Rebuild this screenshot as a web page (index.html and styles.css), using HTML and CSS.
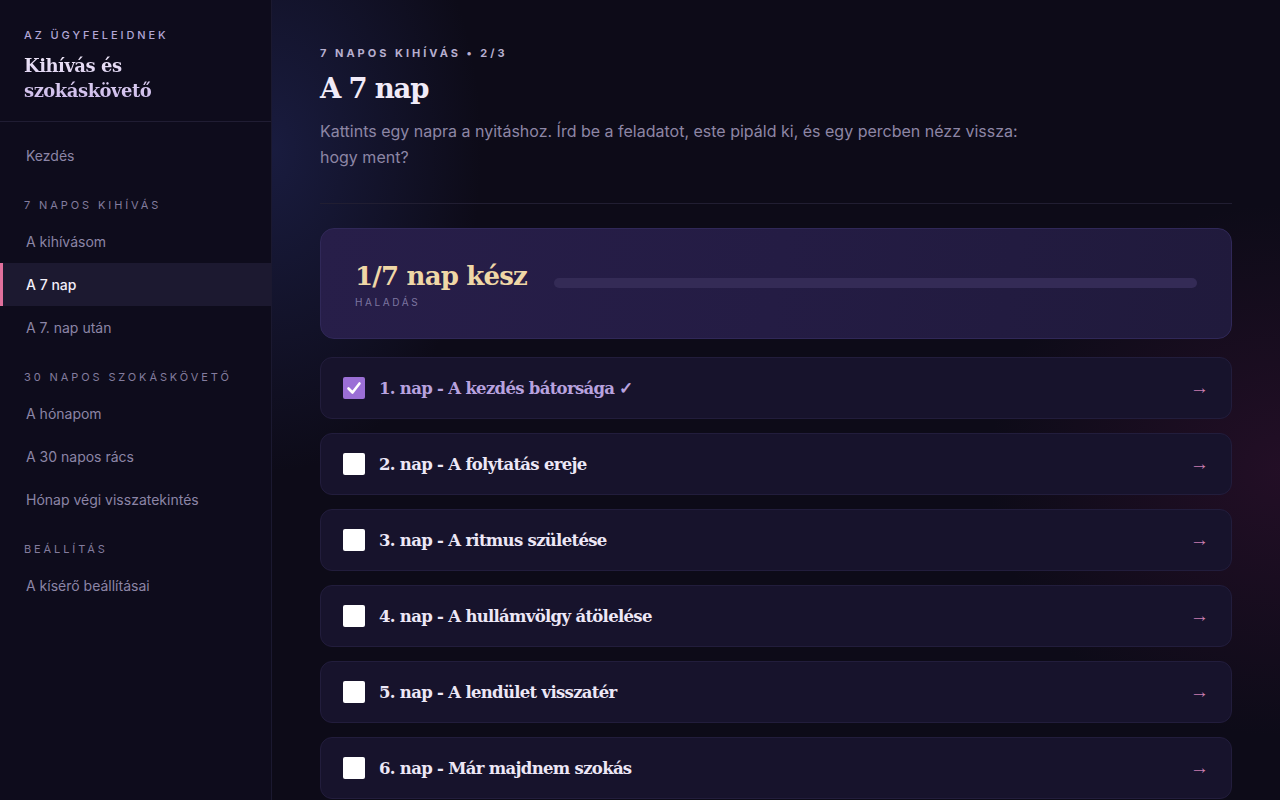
FILE: index.html
```html
<!DOCTYPE html>
<html lang="hu">
<head>
<meta charset="utf-8">
<title>A 7 nap</title>
<link rel="stylesheet" href="styles.css">
</head>
<body>
<div class="app">
  <aside class="sidebar">
    <div class="brand">
      <div class="brand-eyebrow">AZ ÜGYFELEIDNEK</div>
      <div class="brand-title">Kihívás és<br>szokáskövető</div>
    </div>
    <nav class="nav">
      <a class="nav-item first">Kezdés</a>
      <div class="nav-label">7 NAPOS KIHÍVÁS</div>
      <a class="nav-item">A kihívásom</a>
      <a class="nav-item active">A 7 nap</a>
      <a class="nav-item">A 7. nap után</a>
      <div class="nav-label">30 NAPOS SZOKÁSKÖVETŐ</div>
      <a class="nav-item">A hónapom</a>
      <a class="nav-item">A 30 napos rács</a>
      <a class="nav-item">Hónap végi visszatekintés</a>
      <div class="nav-label">BEÁLLÍTÁS</div>
      <a class="nav-item">A kísérő beállításai</a>
    </nav>
  </aside>
  <main class="main">
    <header class="page-head">
      <div class="eyebrow">7 NAPOS KIHÍVÁS • 2/3</div>
      <h1 class="title">A 7 nap</h1>
      <p class="lead">Kattints egy napra a nyitáshoz. Írd be a feladatot, este pipáld ki, és egy percben nézz vissza: hogy ment?</p>
    </header>
    <section class="progress-card">
      <div class="progress-text">
        <div class="progress-value">1/7 nap kész</div>
        <div class="progress-label">HALADÁS</div>
      </div>
      <div class="progress-bar"><div class="progress-fill" style="width:0%"></div></div>
    </section>
    <ul class="days">
      <li class="day done"><span class="check checked"><svg viewBox="0 0 22 22" width="22" height="22"><path d="M5.5 11.5 L9.5 15.5 L16.5 6.5" fill="none" stroke="#fff" stroke-width="2.6" stroke-linecap="round" stroke-linejoin="round"/></svg></span><span class="day-title">1. nap - A kezdés bátorsága ✓</span><span class="arrow">→</span></li>
      <li class="day"><span class="check"></span><span class="day-title">2. nap - A folytatás ereje</span><span class="arrow">→</span></li>
      <li class="day"><span class="check"></span><span class="day-title">3. nap - A ritmus születése</span><span class="arrow">→</span></li>
      <li class="day"><span class="check"></span><span class="day-title">4. nap - A hullámvölgy átölelése</span><span class="arrow">→</span></li>
      <li class="day"><span class="check"></span><span class="day-title">5. nap - A lendület visszatér</span><span class="arrow">→</span></li>
      <li class="day"><span class="check"></span><span class="day-title">6. nap - Már majdnem szokás</span><span class="arrow">→</span></li>
    </ul>
  </main>
</div>
</body>
</html>
```
FILE: styles.css
```css
* { box-sizing: border-box; }
html, body { margin: 0; padding: 0; height: 100%; }
body {
  font-family: "Inter", "DejaVu Sans", sans-serif;
  background: #0c0a17;
  color: #e9e4f3;
  overflow: hidden;
}
.app {
  display: flex;
  height: 800px;
}
.sidebar {
  width: 272px;
  flex: none;
  background: #0e0c1c;
  border-right: 1px solid #1b1930;
}
.brand {
  padding: 28px 24px 18px;
  border-bottom: 1px solid #201d33;
}
.brand-eyebrow {
  font-size: 11px;
  letter-spacing: 2.9px;
  font-weight: 500;
  color: #b2a7d6;
  line-height: 14px;
}
.brand-title {
  margin-top: 11px;
  font-family: "DejaVu Serif", "Liberation Serif", serif;
  font-weight: 700;
  font-size: 18px;
  line-height: 25px;
  letter-spacing: -0.5px;
  color: #e7dff4;
  background: linear-gradient(180deg, #efe8f8 0%, #cbb8ea 100%);
  -webkit-background-clip: text;
  background-clip: text;
  -webkit-text-fill-color: transparent;
}
.nav {
  display: flex;
  flex-direction: column;
  padding-top: 12px;
}
.nav-item {
  display: block;
  height: 43px;
  line-height: 43px;
  padding-left: 23px;
  font-size: 14px;
  color: #8c85a6;
  border-left: 3px solid transparent;
}
.nav-item.active {
  background: #1c1930;
  border-left-color: #e0709c;
  color: #f2eef8;
  font-weight: 500;
}
.nav-label {
  padding: 21px 24px 7px;
  font-size: 11px;
  letter-spacing: 2.9px;
  color: #837c9e;
  line-height: 14px;
}
.nav-label + .nav-item { margin-top: 1px; }
.main {
  flex: 1;
  padding: 46px 48px 0;
  background:
    radial-gradient(ellipse 300px 460px at 0px 150px, rgba(40,48,110,0.45), transparent 70%),
    radial-gradient(ellipse 420px 380px at 1010px 470px, rgba(70,20,60,0.38), transparent 70%),
    #0d0b18;
  overflow: hidden;
}
.page-head {
  border-bottom: 1px solid #211e32;
  padding-bottom: 33px;
  margin-bottom: 24px;
}
.eyebrow {
  font-size: 11px;
  font-weight: 700;
  letter-spacing: 3px;
  color: #b7afcf;
  line-height: 14px;
}
.title {
  margin: 8px 0 0;
  font-family: "DejaVu Serif", "Liberation Serif", serif;
  font-weight: 700;
  font-size: 27.5px;
  line-height: 40px;
  letter-spacing: -1.2px;
  color: #f1ebf8;
}
.lead {
  margin: 10px 0 0;
  max-width: 710px;
  font-size: 16px;
  line-height: 26px;
  color: #8d86a5;
}
.progress-card {
  display: flex;
  align-items: center;
  gap: 27px;
  height: 111px;
  padding: 0 34px;
  border-radius: 14px;
  background: linear-gradient(100deg, #271e49 0%, #241c44 50%, #201a3c 100%);
  border: 1px solid #302858;
  margin-bottom: 18px;
}
.progress-text { flex: none; padding-top: 0; }
.progress-value {
  font-family: "DejaVu Serif", "Liberation Serif", serif;
  font-weight: 700;
  font-size: 26px;
  line-height: 32px;
  letter-spacing: -0.8px;
  color: #efd7a6;
}
.progress-label {
  margin-top: 4px;
  font-size: 10px;
  letter-spacing: 2.6px;
  color: #7d76a0;
  line-height: 12px;
}
.progress-bar {
  flex: 1;
  height: 10px;
  border-radius: 5px;
  background: #342b56;
  overflow: hidden;
  margin-top: -1px;
}
.progress-fill { height: 100%; background: #8e6ad0; }
.days {
  list-style: none;
  margin: 0;
  padding: 0;
  display: flex;
  flex-direction: column;
  gap: 14px;
}
.day {
  display: flex;
  align-items: center;
  height: 62px;
  padding: 0 22px;
  border-radius: 12px;
  background: #17132c;
  border: 1px solid #221d3c;
}
.check {
  width: 22px;
  height: 22px;
  flex: none;
  border-radius: 2px;
  background: #ffffff;
  margin-right: 14px;
  display: flex;
}
.check.checked { background: #9b6fd6; }
.day-title {
  flex: 1;
  font-family: "DejaVu Serif", "Liberation Serif", serif;
  font-weight: 700;
  font-size: 16.5px;
  letter-spacing: -0.7px;
  color: #ede7f6;
}
.day.done .day-title { color: #b8a2df; }
.arrow {
  font-family: "Liberation Sans", "DejaVu Sans", sans-serif;
  color: #c97fb3;
  font-size: 19px;
}
```
